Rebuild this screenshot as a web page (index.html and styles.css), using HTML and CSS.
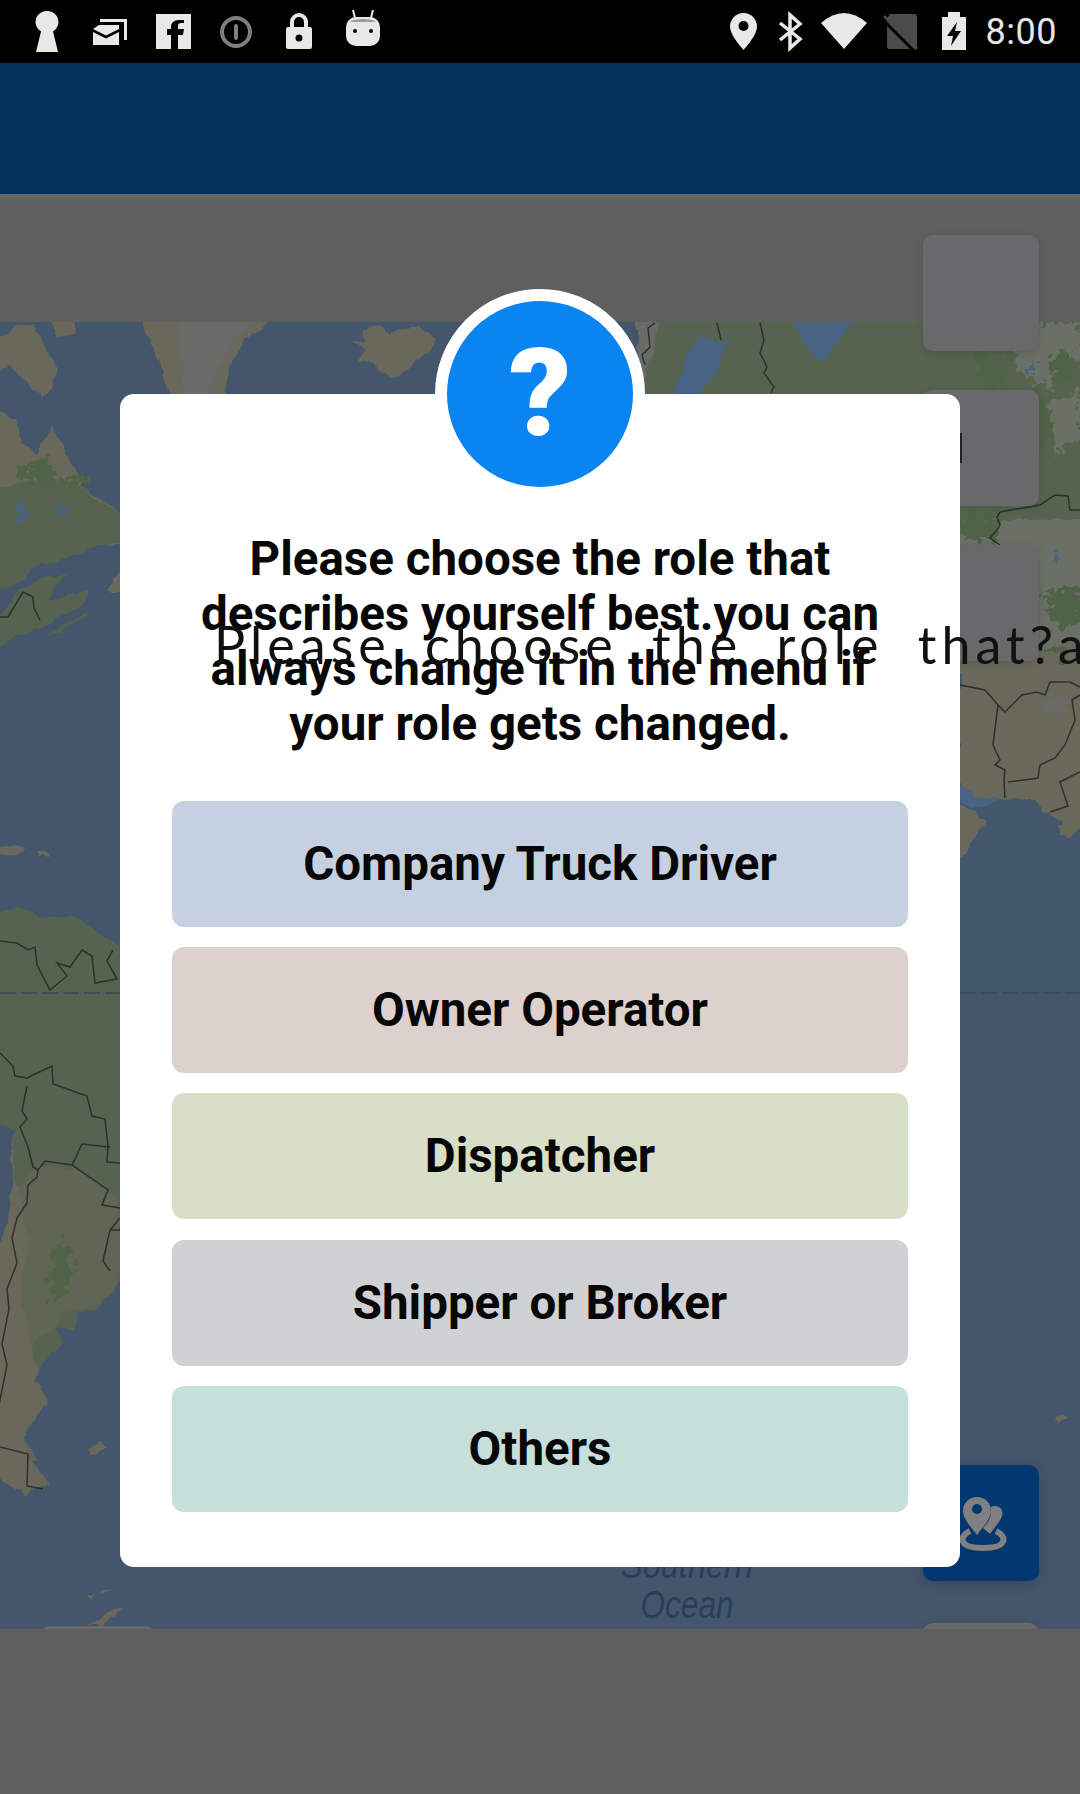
FILE: index.html

```html
<!DOCTYPE html>
<html lang="en">

<head>
  <meta charset="UTF-8">
  <title>Choose Role</title>
  <link rel="stylesheet" href="styles.css">
</head>

<body>
  <div class="screen">
    <header class="status-bar">
      <div class="status-left">
        <svg class="slot" viewBox="16 0 63 63"><path class="ico" d="M47 11a11 11 0 0 1 6 20.5L58 52H36l5-20.5A11 11 0 0 1 47 11z"/></svg>
        <svg class="slot" viewBox="79 0 63 63">
          <path class="ico-line" d="M100 20.5h25.5V40"/>
          <path class="ico" d="M93 29l6-4h20v4l-13 6.500zM93 32l13 6.500L119 32v13H93z"/>
        </svg>
        <svg class="slot" viewBox="142 0 63 63">
          <rect class="ico" x="156" y="14" width="35" height="35"/>
          <path class="ico-cut" d="M178 49V35h5l1-6h-6v-3c0-2 1-3 3-3h3v-3h-5c-5 0-8 3-8 7v2h-4v6h4v14z"/>
        </svg>
        <svg class="slot" viewBox="205 0 63 63">
          <circle class="ico-dim" cx="236" cy="32" r="14"/>
          <rect x="234" y="24" width="4" height="16" rx="2" fill="#7f7f7f"/>
        </svg>
        <svg class="slot" viewBox="267 0 63 63">
          <path class="ico-shackle" d="M291 29v-7a7 7 0 0 1 14 0v7"/>
          <rect class="ico" x="285" y="27" width="26" height="22" rx="2"/>
          <circle class="ico-cut" cx="298" cy="38" r="3.500"/>
        </svg>
        <svg class="slot" viewBox="331 0 63 63">
          <path class="ico-shackle thin" d="M353 10l2 8M373 10l-2 8"/>
          <rect class="ico" x="346" y="17" width="34" height="29" rx="10"/>
          <path d="M350 22c3-4 23-4 26 0z" fill="#9c9c9c"/>
          <circle class="ico-cut" cx="355" cy="31" r="2"/>
          <circle class="ico-cut" cx="371" cy="31" r="2"/>
        </svg>
      </div>
      <div class="status-right">
        <svg class="slot-loc" viewBox="731 0 37 63">
          <path class="ico" d="M744.500 13a13.500 13.500 0 0 1 13.500 13.500c0 9-13.500 23.500-13.500 23.500S731 35.500 731 26.500A13.500 13.500 0 0 1 744.500 13z"/>
          <circle class="ico-cut" cx="744.500" cy="26" r="5"/>
        </svg>
        <svg class="slot-bt" viewBox="768 0 47 63"><path class="ico-bt" d="M781 23l20 16-10 9V15l10 9-20 16"/></svg>
        <svg class="slot-wifi" viewBox="815 0 60 63"><path class="ico" d="M822 23Q845 3 868 23L845 49z"/></svg>
        <svg class="slot-sim" viewBox="875 0 53 63">
          <path d="M891 14h24a3 3 0 0 1 3 3v30a2 2 0 0 1-2 2h-26a2 2 0 0 1-2-2V18z" fill="#4b4b4b"/>
          <path d="M884 20l32 32" stroke="#000" stroke-width="3" fill="none"/>
          <path d="M885 16l33 33" stroke="#4b4b4b" stroke-width="2.500" fill="none"/>
        </svg>
        <svg class="slot-bat" viewBox="928 0 54 63">
          <path class="ico" d="M949 12h12v5h6v33h-24V17h6z"/>
          <path class="ico-cut" d="M958 22l-10 14h6l-2 10 10-15h-6z"/>
        </svg>
        <span class="clock">8:00</span>
      </div>
    </header>

    <div class="app-bar"></div>

    <main class="map-area">
      <div class="map-top"></div>
      <svg class="map" viewBox="0 322 1080 1307">
        <defs>
          <filter id="rough" x="-5%" y="-5%" width="110%" height="110%">
            <feTurbulence type="fractalNoise" baseFrequency="0.06" numOctaves="3" seed="4"/>
            <feDisplacementMap in="SourceGraphic" scale="9" xChannelSelector="R" yChannelSelector="G"/>
          </filter>
          <filter id="blotch" x="-5%" y="-5%" width="110%" height="110%">
            <feTurbulence type="fractalNoise" baseFrequency="0.12" numOctaves="3" seed="9"/>
            <feDisplacementMap in="SourceGraphic" scale="26" xChannelSelector="R" yChannelSelector="G"/>
          </filter>
        </defs>
        <rect x="0" y="322" width="1080" height="1307" fill="#43566c"/>

        <g filter="url(#rough)">
          <!-- north america -->
          <path class="land-tan" d="M-10 342l27-15 16-2 10 20 15 22-5 18-13 13-13-18-17-13-20 4z"/>
          <path class="land-tan" d="M50 315l23 3 2 12-15 10z"/>
          <path class="land-tan" d="M-10 403l27 17 5 23 15 11 16-27 10 20 20 32-3 8 30 18 20 14v26H-10z"/>
          <path class="land-green" d="M-10 490l35-8 30-4 20 6 25 18 30 14v26l-30 4-33 13-34 9-13 14-30 14z"/>
          <path class="land-tan" d="M108 592l22-42v42z"/>
          <path class="land-green" d="M-10 628l30-40 45-16-10 16-7 12 42-8-5 10-25 14-18 12-20 5-32 22z"/>
          <path class="land-green" d="M45 636l30-16 15-10-5 8-25 14z"/>
          <path class="land-tan" d="M-10 845l35 2-6 7-29 2zM38 853h10v3H38z"/>

          <!-- greenland, iceland -->
          <path class="land-tan" d="M140 310h145l-40 30-15 25-12 39h-48l-10-44-15-25z"/>
          <path class="land-ice" d="M175 310h90l-30 28-15 26-12 40h-26l-3-40z"/>
          <path class="land-tan" d="M362 330l18-5 8 8 20-4 12-4 17 15-10 14-25 20-10 3-14-2-4-12-16-3 8-10-12-6 10-4z"/>

          <!-- europe, russia top strip -->
          <path class="land-green" d="M636 310h454v412H960V404H636z"/>
          <path class="land-ice" d="M636 310h25l-8 42-8 22-9 30z"/>
          <path class="lake" d="M671 404l18-52 11-16 28 5-8 24-25 39zM788 310h79l-30 31-15 24-14-20-10-13z"/>
          <path class="land-tan" d="M960 660h130v190H960z"/>
          <path class="land-tan" d="M960 660l80-10 50-30v60H960z"/>
          <path class="land-mix" d="M960 520h130v120l-50 10-80 5z"/>

          <!-- arabian sea -->
          <path fill="#43566c" d="M950 783l25 15 25 1 30-1 10 7 10 10 10 7 2 4-7 1 5 8 10 1 20-11v170H950z"/>
          <path class="land-tan" d="M950 800l25 10 10 13-10 17-10 15-15 5z"/>
          <path fill="#4a6484" d="M950 778l25 20 25 1-15 10-10-2-25-9z"/>

          <!-- south america -->
          <path class="land-green" d="M-10 914l27-7 23 9 40 2 20 16 30 18v316l-15 21-15 17-23 8-5 15H55l7 15-12 10-15 26 13 20-15 23-8 12 3 21 22 28-23 10-17-8-20-15V1268l17-40 6-51 2-47-25-6z"/>
          <path class="land-mid" d="M40 1165l40 5 40 30v75l-10 22-25 12-20 2-12 20-15 8-10 30 5 20-15 25 3 20 18 26-20 8-14-8-15-20v-100l10-60 10-50 5-40z"/>
          <path class="land-tan" d="M15 1130l-2 47-6 51-17 40v203l20 15 17 8 23-10-22-28-3-21 8-12 15-23-13-20 5-10-12-30-8-50 8-50-8-40-10-40z"/>
          <path class="land-tan" d="M88 1448l12-5 7 3-10 7-8 1zM85 1596l12-4-3 5zM100 1592l12-3-8 5z"/>
          <path class="land-tan" d="M88 1626l16-9 18-10-6 8-14 12z"/>
          <path class="land-tan" d="M1055 1417l8-3 5 4-10 3z"/>
        </g>

        <!-- blotchy vegetation -->
        <g filter="url(#blotch)">
          <path class="land-dark" d="M15 470l30-12 12 4-3 22-18 3-12-5zM65 478l18-4 4 8-20 8z"/>
          <path class="lake" d="M17 505h8v12h-8zM55 505l10 2 2 10-12-2z"/>
          <path class="land-dark" d="M52 1250l18-10 3 30-5 25-16 5-3-25z"/>
          <path class="land-mix" d="M960 322h120v36l-30 30-25-10-15-30-20-10zM1040 405l40-15v50l-25 10zM970 400l25 10 5 40-20 10-10-30zM1000 460l30 10 5 30-30 5z"/>
          <path class="land-dark" d="M975 345l30 10 5 25-20 10-15-15zM1020 395l20-5 15 35-15 30-22-20zM1045 360l25-10 10 25-22 10z"/>
          <path class="land-dark" d="M960 515h40l-3 25h-37zM1045 590h35v40l-30-10zM1045 645l25 3v10l-25-3z"/>
          <path class="land-ice" d="M985 555l25 5 5 20-20 5zM1040 700l25-5 5 15-25 5z"/>
          <path class="lake" d="M1056 555h5v8h-5zM1030 362h4v12h-4z"/>
        </g>

        <!-- borders -->
        <path class="border" d="M0 617h8l15-25 10 5 1 11 6 12"/>
        <path class="border" d="M0 941l17 2 11 7 7-3 2 18 13 25 17-14-10-13 13 4 12-17 10 6 3 27 22-4-10-18 6-11"/>
        <path class="border" d="M0 1053l13 13 2 10 12 2 25-12 1 18 34 12 5 20 13 3 3 28-1 15 13 1"/>
        <path class="border" d="M27 1086l-5 25 5 8-7 8 8 20 5 20 5 3 7-9 27 4 36 25-6 15 18 3"/>
        <path class="border" d="M72 1165l10-21 28 3"/>
        <path class="border" d="M38 1170l-1 7-9 8-1 18-10 15-5 20 5 25-10 26 2 20-7 35 5 21-8 40"/>
        <path class="border" d="M120 1218l-10 12-7 31 7 10M110 1230h10"/>
        <path class="border" d="M0 1447l28 7-1 32 16 3"/>
        <path class="border" d="M655 323l-7 5 2 19-8 8 3 10"/>
        <path class="border" d="M717 323l4 17M760 323l4 17-4 13 7 14-3 6 10 14-3 6"/>
        <path class="border" d="M1080 510h-10l-2-14-13-1-15 10-40 7-3 5 3 8-3 5-7 8 10 7"/>
        <path class="border" d="M960 685l25 5 13 15 7 7 17-17 15-3 8 3 5-13h20l10 5"/>
        <path class="border" d="M998 705l-5 40 7 15-5 5 10 5-1 10 1 18M1008 782l30-4 2-13 15-7 10-13 10-25-3-20 8-5"/>
        <path class="border" d="M1080 772l-20 10 8 24-18 6"/>
        <path class="dash" d="M0 993h120M960 993h120"/>

        <text class="ocean-label" x="687" y="1578" textLength="132" lengthAdjust="spacingAndGlyphs">Southern</text>
        <text class="ocean-label" x="687" y="1618" textLength="93" lengthAdjust="spacingAndGlyphs">Ocean</text>
      </svg>

      <div class="map-chip"></div>

      <div class="tools">
        <div class="tool"></div>
        <div class="tool"></div>
        <div class="tool"></div>
        <div class="tool tool-active">
          <svg class="tool-icon" viewBox="0 0 116 116">
            <path class="pin-ring" d="M47 66c-12 6-11 17 13 17s25-11 13-17"/>
            <path class="pin-small" d="M68 42c7-3 13 2 11 9-2 6-8 12-12 18l-7-6c4-5 9-9 8-21z"/>
            <path class="pin-big" d="M54 32a14 14 0 0 1 14 14c0 8-9 17-14 24-5-7-14-16-14-24a14 14 0 0 1 14-14z"/>
            <circle class="pin-hole" cx="54" cy="44" r="5"/>
          </svg>
        </div>
        <div class="tool tool-last"></div>
      </div>
    </main>

    <div class="bottom-bar"></div>
  </div>

  <div class="dialog">
    <div class="dialog-badge">?</div>
    <h2 class="dialog-title">Please choose the role that describes yourself best.you can always change it in the menu if your role gets changed.</h2>
    <div class="role-list">
      <button class="role role-driver">Company Truck Driver</button>
      <button class="role role-owner">Owner Operator</button>
      <button class="role role-dispatcher">Dispatcher</button>
      <button class="role role-shipper">Shipper or Broker</button>
      <button class="role role-others">Others</button>
    </div>
  </div>

  <div class="stray-title">Please choose the role that?a</div>
</body>

</html>
```

FILE: styles.css

```css
html,
body {
  margin: 0;
  height: 100%;
}

body {
  position: relative;
  width: 1080px;
  height: 1794px;
  overflow: hidden;
  font-family: 'Roboto', 'Liberation Sans', sans-serif;
  background: #5f5f5f;
}

.screen {
  display: flex;
  flex-direction: column;
  height: 1794px;
}

/* status bar */
.status-bar {
  display: flex;
  justify-content: space-between;
  height: 63px;
  flex-shrink: 0;
  background: #000;
}

.status-left {
  display: flex;
  padding-left: 16px;
}

.status-right {
  display: flex;
  align-items: center;
}

.slot { width: 63px; height: 63px; }
.slot-loc { width: 37px; height: 63px; }
.slot-bt { width: 47px; height: 63px; }
.slot-wifi { width: 60px; height: 63px; }
.slot-sim { width: 53px; height: 63px; }
.slot-bat { width: 54px; height: 63px; }

.ico { fill: #e8e8e8; }
.ico-cut { fill: #000; }
.ico-line { fill: none; stroke: #e8e8e8; stroke-width: 3; }
.ico-dim { fill: none; stroke: #7f7f7f; stroke-width: 4; }
.ico-shackle { fill: none; stroke: #e8e8e8; stroke-width: 4; }
.ico-shackle.thin { stroke-width: 2; }
.ico-bt { fill: none; stroke: #e8e8e8; stroke-width: 3.5; }

.clock {
  margin-left: 5px;
  margin-right: 23px;
  color: #e6e6e6;
  font-size: 36px;
  letter-spacing: .5px;
}

.app-bar {
  height: 131px;
  flex-shrink: 0;
  background: #05325d;
}

/* map */
.map-area {
  position: relative;
  flex: 1;
  overflow: hidden;
}

.map-top {
  height: 123px;
  background: #5f5f5f;
  border-top: 5px solid #656565;
}

.map {
  display: block;
  width: 1080px;
  height: 1307px;
}

.land-tan { fill: #69675a; }
.land-green { fill: #55634f; }
.land-mid { fill: #606555; }
.land-dark { fill: #4f6347; }
.land-ice { fill: #6a6a69; }
.land-mix { fill: #6b7066; }
.lake { fill: #4a6484; }
.border { fill: none; stroke: #2b302e; stroke-width: 1.500; }
.dash { fill: none; stroke: #39485a; stroke-width: 1.500; stroke-dasharray: 16 5; }

.ocean-label {
  fill: #2a3e5a;
  font-family: 'Liberation Sans', sans-serif;
  font-size: 38px;
  font-style: italic;
  text-anchor: middle;
}

.map-chip {
  position: absolute;
  left: 40px;
  top: 1432px;
  width: 115px;
  height: 40px;
  border-radius: 10px;
  background: #69696b;
}

.tools {
  position: absolute;
  top: 41px;
  right: 41px;
  bottom: -110px;
  display: flex;
  flex-direction: column;
  gap: 39px;
}

.tool {
  width: 116px;
  height: 116px;
  border-radius: 10px;
  background: #69696b;
  box-shadow: 0 2px 10px rgba(0, 0, 0, .12);
}

.tool-active {
  margin-top: auto;
  background: #02386f;
  box-shadow: 0 2px 14px rgba(0, 0, 0, .2);
}

.tool-last {
  margin-top: 3px;
}

.tool-icon {
  display: block;
  width: 116px;
  height: 116px;
}

.pin-big,
.pin-small { fill: #808080; }
.pin-ring { fill: none; stroke: #808080; stroke-width: 6; }
.pin-hole { fill: #02386f; }

.bottom-bar {
  height: 165px;
  flex-shrink: 0;
  background: #5f5f5f;
}

/* dialog */
.dialog {
  position: absolute;
  top: 394px;
  left: 120px;
  width: 840px;
  height: 1173px;
  box-sizing: border-box;
  padding: 138px 52px 0;
  border-radius: 14px;
  background: #fff;
}

/* small dark mark beside the dialog edge */
.dialog::after {
  content: "";
  position: absolute;
  top: 39px;
  left: 100%;
  width: 2px;
  height: 30px;
  background: #222;
}

.dialog-badge {
  position: absolute;
  top: -105px;
  left: 315px;
  display: flex;
  align-items: center;
  justify-content: center;
  box-sizing: content-box;
  width: 186px;
  height: 186px;
  border: 12px solid #fff;
  border-radius: 50%;
  background: #0a84f0;
  color: #fff;
  font-size: 122px;
  font-weight: 900;
  line-height: 200px;
}

.dialog-title {
  margin: 0 0 49px;
  color: #070707;
  font-size: 47.500px;
  font-weight: 700;
  line-height: 55px;
  text-align: center;
}

.role-list {
  display: flex;
  flex-direction: column;
  gap: 20.200px;
}

.role {
  height: 126px;
  border: none;
  border-radius: 12px;
  color: #070707;
  font-family: inherit;
  font-size: 47.500px;
  font-weight: 700;
}

.role-driver { background: #c5d1e0; }
.role-owner { background: #ddd1cd; }
.role-dispatcher { background: #d7dfc8; }
.role-shipper { background: #d0d1d5; }
.role-others { background: #c6dfda; }

.stray-title {
  position: absolute;
  top: 610px;
  left: 214px;
  color: #111;
  font-family: 'Lato', sans-serif;
  font-size: 52px;
  font-weight: 400;
  letter-spacing: 5px;
  word-spacing: 16px;
  line-height: 68px;
  white-space: nowrap;
}
```
